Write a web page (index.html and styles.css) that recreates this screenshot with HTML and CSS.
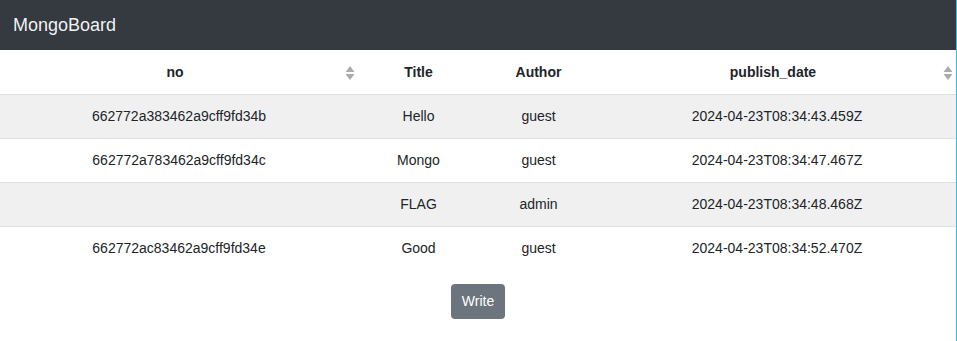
FILE: index.html
```html
<!DOCTYPE html>
<html lang="en">
<head>
    <meta charset="UTF-8">
    <meta name="viewport" content="width=device-width, initial-scale=1.0">
    <title>MongoBoard</title>
    <link rel="stylesheet" href="styles.css">
</head>
<body>
    <div id="page">
        <nav class="navbar">
            <span class="brand">MongoBoard</span>
        </nav>

        <table class="board">
            <colgroup>
                <col class="col-no">
                <col class="col-title">
                <col class="col-author">
                <col class="col-date">
            </colgroup>
            <thead>
                <tr>
                    <th class="sortable">no
                        <svg class="sort-icon" width="10" height="16" viewBox="0 0 10 16"><path d="M5 1 L9.5 7 H0.5 Z M5 15 L9.5 9 H0.5 Z" fill="#ababab"/></svg>
                    </th>
                    <th>Title</th>
                    <th>Author</th>
                    <th class="sortable">publish_date
                        <svg class="sort-icon" width="10" height="16" viewBox="0 0 10 16"><path d="M5 1 L9.5 7 H0.5 Z M5 15 L9.5 9 H0.5 Z" fill="#ababab"/></svg>
                    </th>
                </tr>
            </thead>
            <tbody>
                <tr>
                    <td>662772a383462a9cff9fd34b</td>
                    <td>Hello</td>
                    <td>guest</td>
                    <td>2024-04-23T08:34:43.459Z</td>
                </tr>
                <tr>
                    <td>662772a783462a9cff9fd34c</td>
                    <td>Mongo</td>
                    <td>guest</td>
                    <td>2024-04-23T08:34:47.467Z</td>
                </tr>
                <tr>
                    <td></td>
                    <td>FLAG</td>
                    <td>admin</td>
                    <td>2024-04-23T08:34:48.468Z</td>
                </tr>
                <tr>
                    <td>662772ac83462a9cff9fd34e</td>
                    <td>Good</td>
                    <td>guest</td>
                    <td>2024-04-23T08:34:52.470Z</td>
                </tr>
            </tbody>
        </table>

        <div class="actions">
            <button class="btn-write">Write</button>
        </div>
    </div>
</body>
</html>
```

FILE: styles.css
```css
html, body {
    margin: 0;
    padding: 0;
    height: 100%;
}

body {
    font-family: "Liberation Sans", Arial, sans-serif;
    font-size: 14px;
    color: #212529;
    background-color: white;
}

#page {
    min-height: 100%;
    border-right: 1px solid #26c6da;
    box-sizing: border-box;
}

.navbar {
    height: 50px;
    background-color: #343a40;
    display: flex;
    align-items: center;
    padding: 0 13px;
}

.brand {
    color: rgba(255,255,255,0.95);
    font-size: 18px;
}

.board {
    width: 100%;
    border-collapse: collapse;
    table-layout: fixed;
}

.col-no { width: 358px; }
.col-title { width: 121px; }
.col-author { width: 119px; }

.board th,
.board td {
    padding: 11px 10px;
    line-height: 21px;
    text-align: center;
    white-space: nowrap;
}

.board th {
    padding-top: 12px;
    font-weight: bold;
    border-bottom: 1px solid #dee2e6;
}

.board th.sortable {
    position: relative;
    padding-right: 18px;
}

.sort-icon {
    position: absolute;
    right: 3px;
    top: 15px;
}

.board td {
    border-bottom: 1px solid #dee2e6;
}

.board tbody tr:nth-child(odd) {
    background-color: #f0f0f0;
}

.board tbody tr:last-child td {
    border-bottom: none;
}

.actions {
    display: flex;
    justify-content: center;
    padding-top: 14px;
}

.btn-write {
    font-family: inherit;
    font-size: 14px;
    line-height: 21px;
    padding: 7px 11px;
    color: white;
    background-color: #6c757d;
    border: none;
    border-radius: 4px;
    cursor: pointer;
}
```
